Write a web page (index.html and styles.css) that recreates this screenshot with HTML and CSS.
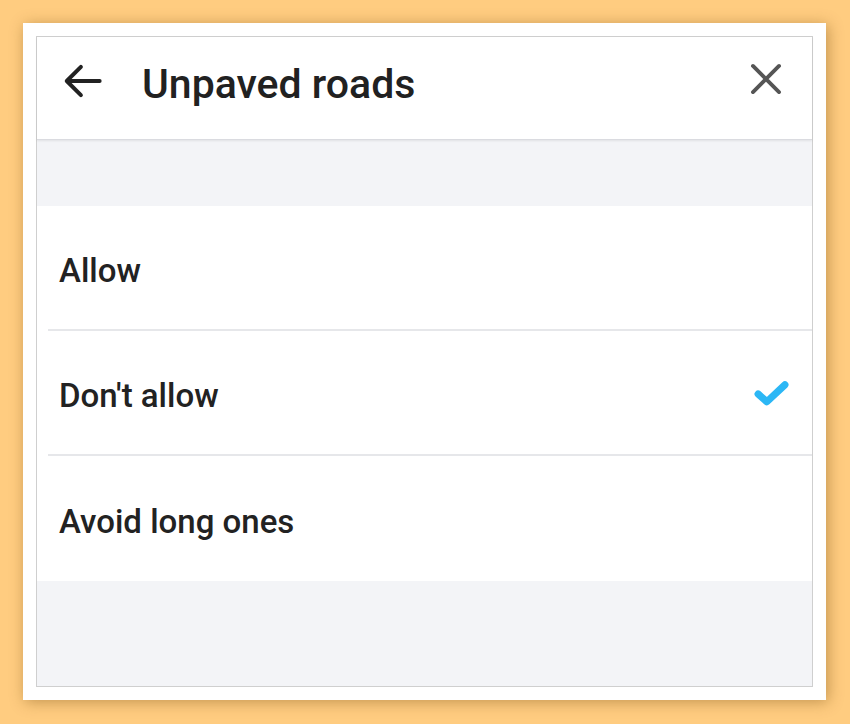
FILE: index.html
```html
<!DOCTYPE html>
<html>
	<head>
		<meta charset="utf-8" />
		<title>Unpaved roads</title>
		<link rel="stylesheet" href="styles.css">
	</head>
	<body>
		<div class="frame">
			<div class="screen">
				<div class="toolbar">
					<svg class="icon back" viewBox="0 0 24 24" width="50" height="50">
						<path d="M20 12H4.8M11 5.2L4.2 12L11 18.8" fill="none" stroke="#222" stroke-width="1.9" stroke-linecap="round" stroke-linejoin="round"/>
					</svg>
					<h1 class="title">Unpaved roads</h1>
					<svg class="icon close" viewBox="0 0 24 24" width="46" height="46">
						<path d="M5.2 5.2L18.8 18.8M18.8 5.2L5.2 18.8" fill="none" stroke="#555" stroke-width="2" stroke-linecap="round"/>
					</svg>
				</div>
				<div class="spacer"></div>
				<ul class="options">
					<li class="option">Allow</li>
					<li class="option selected">
						Don't allow
						<svg class="check" viewBox="0 0 36 30" width="37" height="31">
							<path d="M5 16.5L13.5 24L31 7.5" fill="none" stroke="#2cb7f5" stroke-width="7" stroke-linecap="round" stroke-linejoin="round"/>
						</svg>
					</li>
					<li class="option">Avoid long ones</li>
				</ul>
			</div>
		</div>
	</body>
</html>
```

FILE: styles.css
```css
html, body {
	margin: 0;
	padding: 0;
}
body {
	background: #ffcc80;
	font-family: Roboto, "Liberation Sans", sans-serif;
	color: #212121;
	padding: 23px;
}
.frame {
	width: 777px;
	height: 651px;
	padding: 13px;
	background: #fff;
	box-shadow: 2px 2px 14px rgba(120, 80, 20, 0.45);
}
.screen {
	height: 649px;
	border: 1px solid #cfcfcf;
	background: #f3f4f7;
	display: flex;
	flex-direction: column;
}
.toolbar {
	height: 102px;
	background: #fff;
	display: flex;
	align-items: flex-start;
	border-bottom: 1px solid #dadbe0;
	box-shadow: 0 1px 2px rgba(0, 0, 0, 0.08);
}
.icon { flex: none; }
.back {
	margin: 19px 0 0 21px;
}
.title {
	flex: 1;
	margin: 23px 0 0 34px;
	font-size: 41px;
	line-height: 48px;
	font-weight: 500;
	color: #212121;
}
.close {
	margin: 19px 23px 0 0;
}
.spacer {
	height: 66px;
}
.options {
	list-style: none;
	margin: 0;
	padding: 0;
	background: #fff;
}
.option {
	height: 117px;
	margin-left: 11px;
	padding: 6px 22px 0 11px;
	display: flex;
	align-items: center;
	justify-content: space-between;
	font-size: 33px;
	font-weight: 500;
	color: #222;
	border-bottom: 2px solid #e6e7ea;
}
.option:last-child {
	border-bottom: none;
	height: 119px;
}
.check {
	margin: -6px 0 0 0;
}
```
